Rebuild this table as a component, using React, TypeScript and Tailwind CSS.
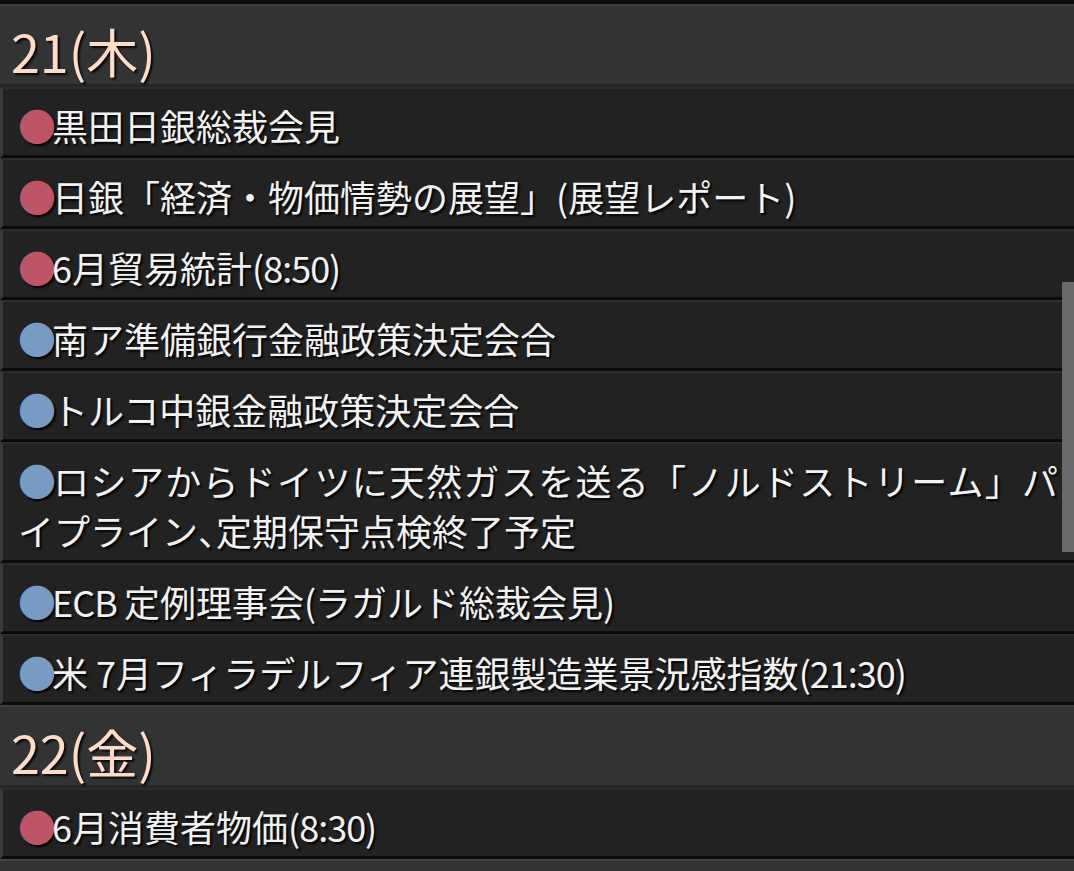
import React from "react";

type Item = { c: "r" | "b"; t: React.ReactNode };

const RED = "text-[#bd5567]";
const BLUE = "text-[#789bc4]";

function L({ children }: { children: React.ReactNode }) {
  return <span className="tracking-[-1px]">{children}</span>;
}

function Header({ label }: { label: string }) {
  return (
    <div className="border-t-2 border-t-[#3e3e3e] border-b-[3px] border-b-[#262626] bg-[#333333] pt-[20px] pb-[8px] pl-[11px] text-[52px] leading-[50px] text-[#ffdcc8] [text-shadow:2px_2px_2px_rgba(0,0,0,0.85)]">
      {label}
    </div>
  );
}

function Row({ item }: { item: Item }) {
  return (
    <div className="border-l-[3px] border-l-[#3a3a3a] border-t-2 border-t-[#2e2e2e] border-b-[3px] border-b-[#0b0b0b] bg-[#222222] pl-[15px] pr-[16px] pt-[11px] pb-[5px] text-[36px] leading-[50px] text-[#f2f2f2] text-justify [text-shadow:2px_2px_2px_rgba(0,0,0,0.9)]">
      <span className={`${item.c === "r" ? RED : BLUE} mr-[-4px] text-[38px]`}>●</span>
      {item.t}
    </div>
  );
}

const day21: Item[] = [
  { c: "r", t: "黒田日銀総裁会見" },
  { c: "r", t: "日銀「経済・物価情勢の展望」(展望レポート)" },
  { c: "r", t: <>6月貿易統計<L>(8:50)</L></> },
  { c: "b", t: "南ア準備銀行金融政策決定会合" },
  { c: "b", t: "トルコ中銀金融政策決定会合" },
  {
    c: "b",
    t: (
      <>
        ロシアからドイツに天然ガスを送る「ノルドストリーム」パイプライン
        <span className="[font-feature-settings:'halt']">、</span>
        定期保守点検終了予定
      </>
    ),
  },
  { c: "b", t: <><L>ECB </L>定例理事会<L>(</L>ラガルド総裁会見<L>)</L></> },
  { c: "b", t: <>米 7月フィラデルフィア連銀製造業景況感指数<L>(21:30)</L></> },
];

const day22: Item[] = [{ c: "r", t: <>6月消費者物価<L>(8:30)</L></> }];

export default function App() {
  return (
    <div className="relative h-[871px] w-[1074px] overflow-hidden bg-[#222222] font-['Noto_Sans_CJK_JP','Noto_Sans_CJK_SC',sans-serif]">
      <div className="h-[4px] bg-[#0c0c0c]" />
      <Header label="21(木)" />
      {day21.map((it, i) => (
        <Row key={i} item={it} />
      ))}
      <Header label="22(金)" />
      {day22.map((it, i) => (
        <Row key={i} item={it} />
      ))}
      <div className="h-[40px] border-t-2 border-t-[#444444] bg-[#333333]" />
      <div className="absolute right-0 top-[282px] h-[270px] w-[12px] bg-[#696969]" />
    </div>
  );
}
